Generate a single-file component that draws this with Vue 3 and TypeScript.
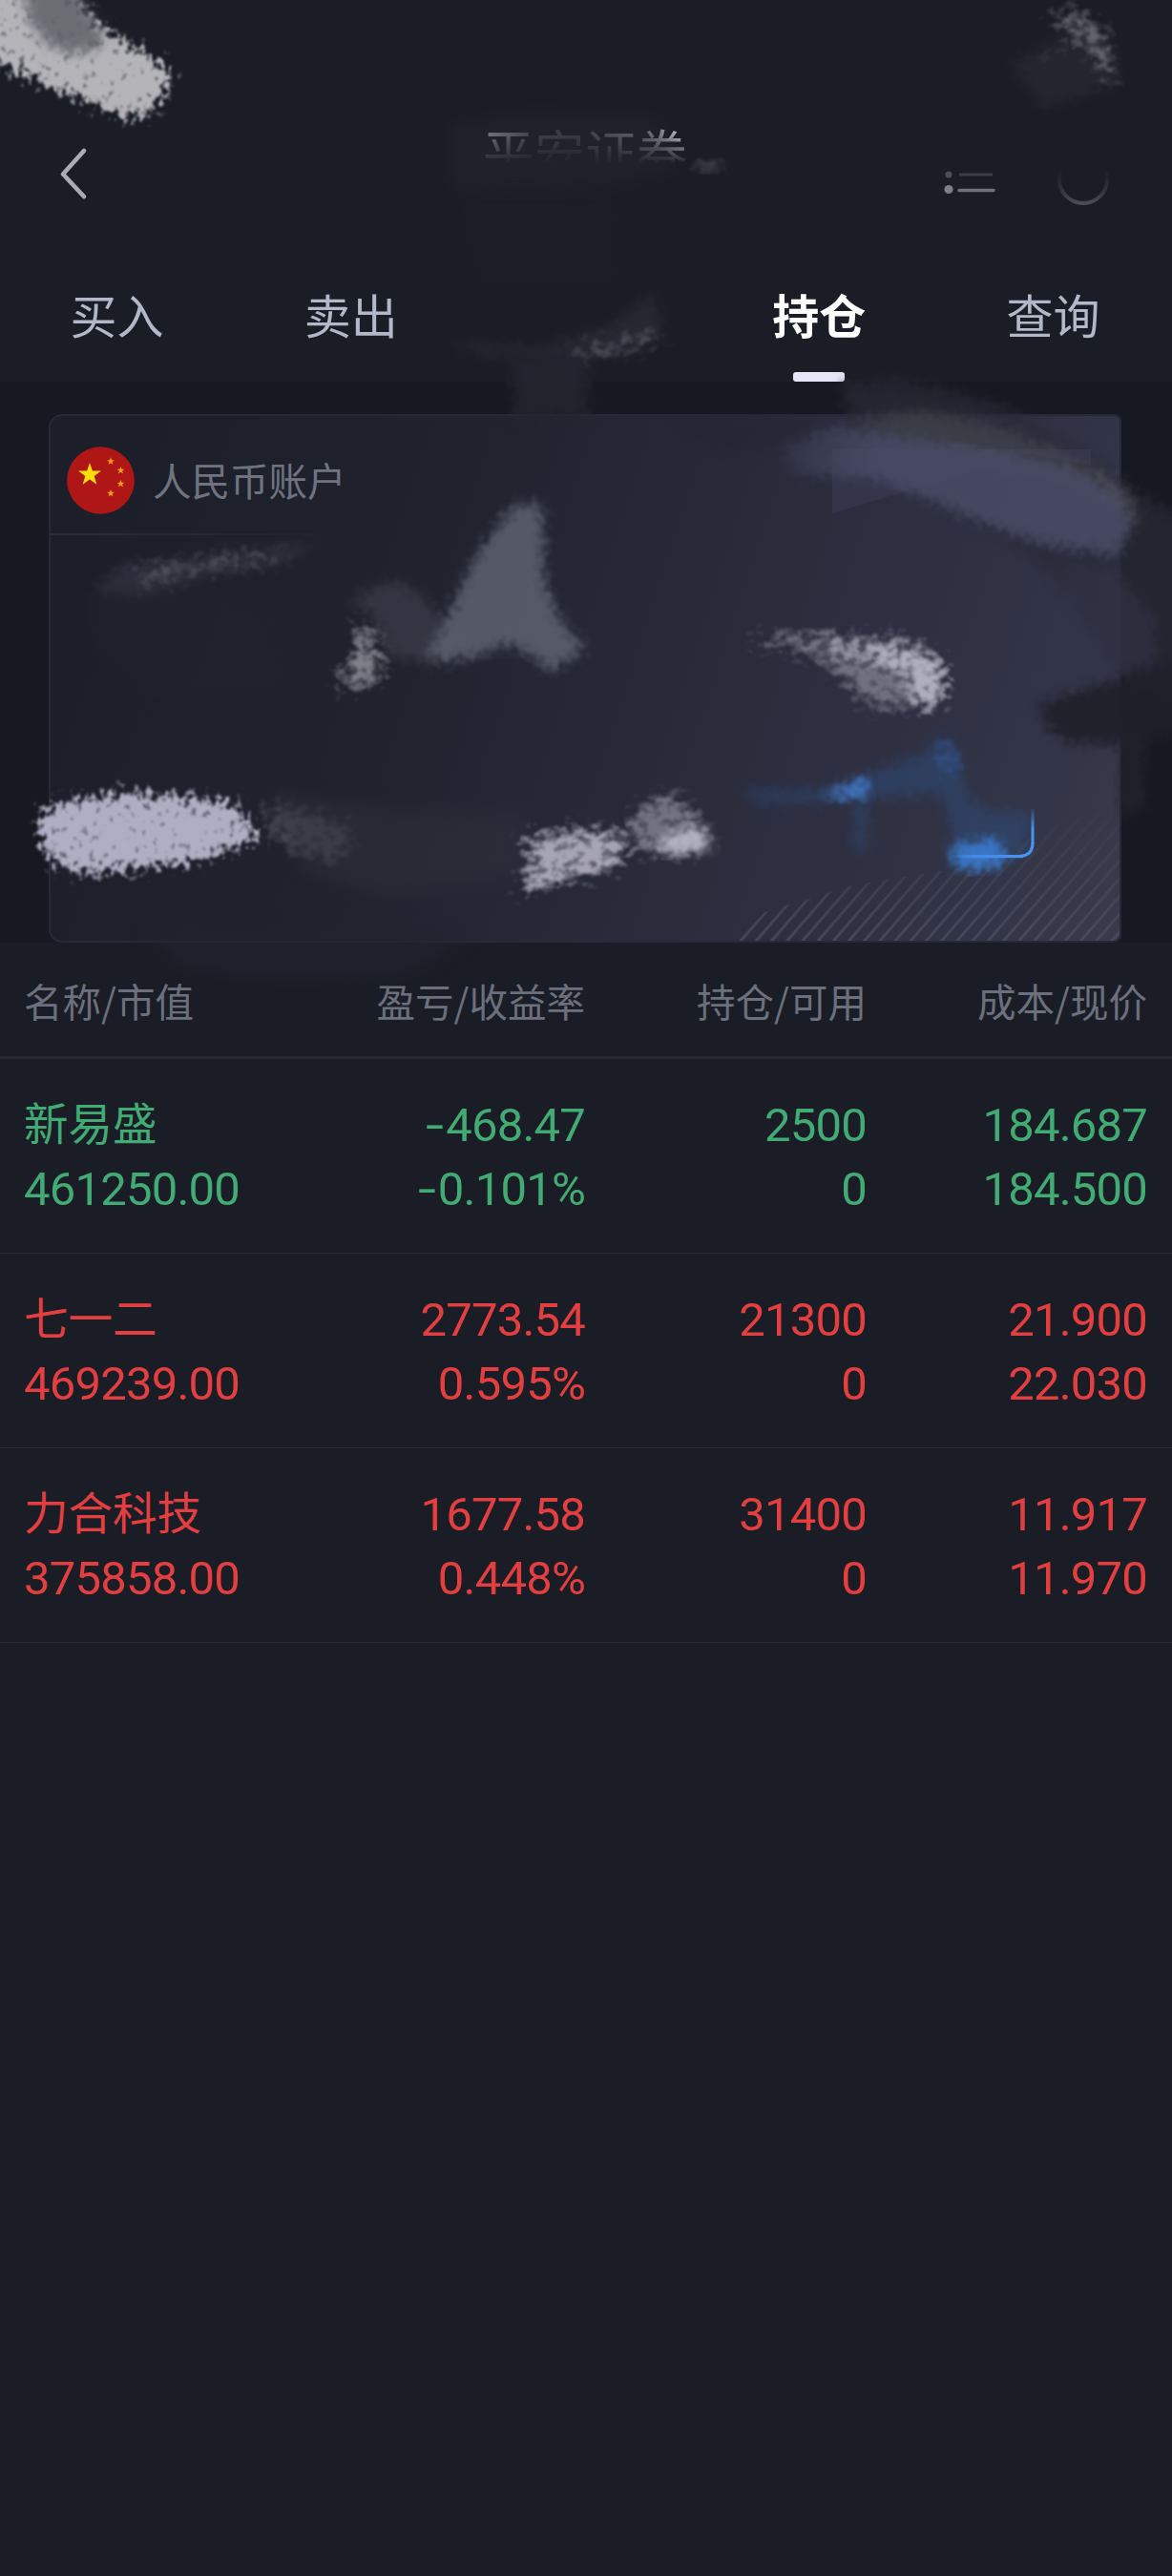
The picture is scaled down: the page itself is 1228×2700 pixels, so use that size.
<script setup lang="ts">
interface Tab {
  label: string
  active?: boolean
}

interface Holding {
  name: string
  value: string
  profit: string
  rate: string
  held: string
  available: string
  cost: string
  price: string
  trend: 'up' | 'down'
}

const tabs: Tab[] = [
  { label: '买入' },
  { label: '卖出' },
  { label: '' },
  { label: '持仓', active: true },
  { label: '查询' },
]

const columns: string[] = ['名称/市值', '盈亏/收益率', '持仓/可用', '成本/现价']

const holdings: Holding[] = [
  { name: '新易盛', value: '461250.00', profit: '-468.47', rate: '-0.101%', held: '2500', available: '0', cost: '184.687', price: '184.500', trend: 'down' },
  { name: '七一二', value: '469239.00', profit: '2773.54', rate: '0.595%', held: '21300', available: '0', cost: '21.900', price: '22.030', trend: 'up' },
  { name: '力合科技', value: '375858.00', profit: '1677.58', rate: '0.448%', held: '31400', available: '0', cost: '11.917', price: '11.970', trend: 'up' },
]

const star = '0,-12.6 2.9,-3.9 12,-3.9 4.7,1.5 7.4,10.2 0,4.9 -7.4,10.2 -4.7,1.5 -12,-3.9 -2.9,-3.9'
const smallStars: [number, number][] = [[46, 15.5], [56.5, 25], [56.5, 39], [46, 49]]
</script>

<template>
  <main class="screen">
    <header class="bar">
      <svg class="back" width="34" height="58" viewBox="0 0 34 58">
        <path d="M27 4 L5 28.500 L27 52" fill="none" stroke="#a9abb6" stroke-width="4.600" stroke-linecap="round" stroke-linejoin="round" />
      </svg>
      <h1 class="title">平安证券</h1>
      <div class="tools">
        <svg width="56" height="50" viewBox="0 0 56 50">
          <circle cx="6" cy="22" r="3.500" fill="#4b4e55" />
          <path d="M17 22H52" stroke="#3a3d44" stroke-width="3" />
          <circle cx="6" cy="37.500" r="4.600" fill="#7c7f85" />
          <path d="M17 38.500H53" stroke="#6e7177" stroke-width="3.400" stroke-linecap="round" />
        </svg>
        <svg width="58" height="58" viewBox="0 0 58 58">
          <defs>
            <linearGradient id="ring" x1="0" y1="0" x2="0" y2="1">
              <stop offset=".25" stop-color="#3d4047" stop-opacity="0" />
              <stop offset=".6" stop-color="#3d4047" stop-opacity=".4" />
              <stop offset="1" stop-color="#4a4d54" />
            </linearGradient>
          </defs>
          <circle cx="29" cy="27" r="25" fill="none" stroke="url(#ring)" stroke-width="4" />
        </svg>
      </div>
    </header>

    <nav class="tabs">
      <div v-for="(tab, i) in tabs" :key="i" class="tab" :class="{ active: tab.active }">{{ tab.label }}</div>
    </nav>

    <section class="account">
      <div class="card">
        <div class="card-head">
          <svg width="71" height="71" viewBox="0 0 71 71">
            <circle cx="35.500" cy="35.500" r="35.300" fill="#ae1715" />
            <polygon :points="star" transform="translate(24 29.500)" fill="#ffdc0c" />
            <polygon v-for="(s, i) in smallStars" :key="i" :points="star" :transform="`translate(${s[0]} ${s[1]}) scale(.34)`" fill="#f0a01c" />
          </svg>
          <span>人民币账户</span>
        </div>
        <svg class="hatch" width="400" height="150" viewBox="0 0 400 150">
          <defs>
            <pattern id="lines" width="16.200" height="20" patternUnits="userSpaceOnUse" patternTransform="skewX(-41)">
              <path d="M4 0V20" stroke="#4b4d5c" stroke-width="4" />
            </pattern>
            <linearGradient id="hatchFade" x1="0" y1="0" x2="0" y2="1">
              <stop offset="0" stop-color="#fff" stop-opacity="0" />
              <stop offset="1" stop-color="#fff" stop-opacity=".8" />
            </linearGradient>
            <mask id="hatchMask"><path d="M0 150 L28 120 L120 92 L230 74 L400 0 V150Z" fill="url(#hatchFade)" /></mask>
          </defs>
          <rect width="400" height="150" fill="url(#lines)" mask="url(#hatchMask)" />
        </svg>
      </div>
    </section>

    <section class="table">
      <div class="row head">
        <div v-for="c in columns" :key="c" class="cell">{{ c }}</div>
      </div>
      <div v-for="h in holdings" :key="h.name" class="row" :class="h.trend">
        <div class="cell"><span class="name">{{ h.name }}</span><span class="num">{{ h.value }}</span></div>
        <div v-for="(pair, i) in [[h.profit, h.rate], [h.held, h.available], [h.cost, h.price]]" :key="i" class="cell">
          <span v-for="(n, j) in pair" :key="j" class="num"><i v-if="n.startsWith('-')" class="minus">-</i>{{ n.replace('-', '') }}</span>
        </div>
      </div>
    </section>

    <!-- brush smears lying over the header and the account card -->
    <svg class="smears" width="1228" height="1060" viewBox="0 0 1228 1060" aria-hidden="true">
      <defs>
        <filter id="grain" x="-15%" y="-25%" width="130%" height="150%" color-interpolation-filters="sRGB">
          <feMorphology in="SourceGraphic" operator="dilate" radius="14" result="wide" />
          <feGaussianBlur in="SourceAlpha" stdDeviation="10" result="a" />
          <feTurbulence type="fractalNoise" baseFrequency=".15 .12" numOctaves="3" seed="4" />
          <feColorMatrix values="0 0 0 0 0  0 0 0 0 0  0 0 0 0 0  2.2 0 0 0 -.6" result="n" />
          <feComposite in="a" in2="n" operator="arithmetic" k2="1" k3=".7" k4="-.35" />
          <feComponentTransfer result="m"><feFuncA type="linear" slope="2.800" intercept="-1.150" /></feComponentTransfer>
          <feComposite in="wide" in2="m" operator="in" />
          <feGaussianBlur stdDeviation="1.200" />
        </filter>
        <filter id="dust" x="-20%" y="-25%" width="140%" height="150%" color-interpolation-filters="sRGB">
          <feMorphology in="SourceGraphic" operator="dilate" radius="12" result="wide" />
          <feGaussianBlur in="SourceAlpha" stdDeviation="10" result="a" />
          <feTurbulence type="fractalNoise" baseFrequency=".1 .12" numOctaves="4" seed="11" />
          <feColorMatrix values="0 0 0 0 0  0 0 0 0 0  0 0 0 0 0  2.4 0 0 0 -.7" result="n" />
          <feComposite in="a" in2="n" operator="arithmetic" k2="1" k3=".6" k4="-.3" />
          <feComponentTransfer result="m"><feFuncA type="linear" slope="1.400" intercept="-.45" /></feComponentTransfer>
          <feComposite in="wide" in2="m" operator="in" />
          <feGaussianBlur stdDeviation="1.300" />
        </filter>
        <filter id="rough" x="-20%" y="-20%" width="140%" height="140%" color-interpolation-filters="sRGB">
          <feGaussianBlur stdDeviation="6" result="b" />
          <feTurbulence type="fractalNoise" baseFrequency=".14" numOctaves="3" seed="7" result="n" />
          <feDisplacementMap in="b" in2="n" scale="20" xChannelSelector="R" yChannelSelector="G" />
          <feGaussianBlur stdDeviation="1.500" />
        </filter>
        <filter id="soft" x="-20%" y="-30%" width="140%" height="160%" color-interpolation-filters="sRGB"><feGaussianBlur stdDeviation="9" /></filter>
        <linearGradient id="blueH" x1="0" x2="1"><stop offset="0" stop-color="#4289e8" stop-opacity="0" /><stop offset=".3" stop-color="#4289e8" /><stop offset="1" stop-color="#4a92f2" /></linearGradient>
        <linearGradient id="blueV" x1="0" y1="0" x2="0" y2="1"><stop offset="0" stop-color="#4a92f2" stop-opacity=".1" /><stop offset=".6" stop-color="#4a92f2" /></linearGradient>
        <linearGradient id="violet" gradientUnits="userSpaceOnUse" x1="820" y1="470" x2="920" y2="490"><stop offset="0" stop-color="#4b4d68" stop-opacity=".25" /><stop offset="1" stop-color="#4b4d68" /></linearGradient>
      </defs>

      <!-- top left -->
      <path d="M-40 -40H56L98 18 132 42 162 58 178 72 182 88 170 106 144 130 98 112 50 92 -40 52Z" fill="#b5b4b9" filter="url(#grain)" />
      <path d="M24 -20H72L112 40 98 54 66 56 42 40 28 14Z" fill="#5b5d64" opacity=".8" filter="url(#rough)" />

      <!-- top right -->
      <path d="M1058 66L1120 34 1164 40 1172 84 1140 100 1092 114Z" fill="#3a3c43" opacity=".3" filter="url(#rough)" />
      <path d="M1096 8L1132 10 1154 26 1166 52 1170 88 1156 90 1146 56 1118 38 1104 22Z" fill="#77797f" opacity=".8" filter="url(#dust)" />
      <path d="M1070 64L1100 52 1134 36 1136 46 1100 60 1074 72Z" fill="#4a4c53" opacity=".6" filter="url(#dust)" />

      <!-- title and hidden tab -->
      <path d="M470 132L560 116 690 124 712 176 640 196 475 200Z" fill="#282a30" opacity=".4" filter="url(#soft)" />
      <path d="M728 168L757 168 748 180 734 180Z" fill="#4a4d54" filter="url(#rough)" />
      <path d="M474 205H650V300H500Z" fill="#202127" opacity=".35" filter="url(#soft)" />
      <path d="M470 358L570 364 640 340 684 306 696 350 670 368 610 378 500 372Z" fill="#33353f" opacity=".45" filter="url(#rough)" />
      <path d="M600 362L650 354 690 342 698 358 650 370 600 378Z" fill="#5b5d69" opacity=".85" filter="url(#dust)" />
      <path d="M535 376H616V440H540Z" fill="#242631" opacity=".8" filter="url(#rough)" />

      <!-- band across the card's upper right corner -->
      <path d="M880 402L940 398 1000 410 1060 430 1100 452 1146 480 1192 516 1250 550V740L1180 720 1100 600 900 470Z" fill="#282a37" opacity=".72" filter="url(#rough)" />
      <path d="M890 442L960 430 1040 444 1100 466 1150 490 1186 520 1196 556 1130 510 960 468Z" fill="#46484f" opacity=".6" filter="url(#rough)" />
      <path d="M872 471H1143V488L1080 476 872 538Z" fill="#4b4d6a" opacity=".25" />
      <path d="M820 462L880 446 960 460 1040 472 1120 490 1170 516 1186 550 1172 582 1090 570 1030 548 970 522 915 502 830 496Z" fill="url(#violet)" opacity=".85" filter="url(#rough)" />
      <path d="M1150 486L1176 508 1190 540 1184 568 1172 530 1146 506Z" fill="#5a5b5f" opacity=".45" filter="url(#dust)" />
      <path d="M705 438L860 438 836 464 760 476 716 456Z" fill="#20222c" opacity=".35" filter="url(#rough)" />
      <path d="M1120 590L1170 600 1212 650 1210 696 1170 712 1090 690Z" fill="#323448" opacity=".6" filter="url(#rough)" />
      <path d="M1088 738L1124 726 1250 690V762L1190 780 1124 780 1098 764Z" fill="#1e202a" opacity=".95" filter="url(#rough)" />
      <path d="M1172 772L1200 774 1200 846 1172 858Z" fill="#252832" opacity=".6" filter="url(#rough)" />

      <!-- first figure line -->
      <path d="M98 620L130 592 200 586 330 570 300 590 210 606 150 625Z" fill="#343743" opacity=".7" filter="url(#rough)" />
      <path d="M130 600L170 592 260 578 310 576 280 590 200 602 160 616Z" fill="#5d606b" opacity=".8" filter="url(#dust)" />
      <path d="M95 618L200 605 280 640 300 720 170 735 100 670Z" fill="#252731" opacity=".35" filter="url(#soft)" />
      <path d="M366 630L410 608 440 622 470 660 480 694 410 690 390 644Z" fill="#444753" opacity=".55" filter="url(#rough)" />
      <path d="M372 648L388 652 402 690 404 716 374 724 344 720 366 698Z" fill="#a3a5ae" opacity=".75" filter="url(#dust)" />
      <path d="M540 528L568 530 570 610 590 654 614 680 576 704 550 682 530 676 490 690 446 692 470 642 504 574Z" fill="#5d616e" opacity=".88" filter="url(#rough)" />
      <path d="M776 672L820 662 880 664 950 666 984 682 994 710 984 740 940 746 900 738 880 708 840 684 790 678Z" fill="#8b8a97" opacity=".75" filter="url(#dust)" />
      <path d="M858 668L900 676 950 676 984 688 994 712 984 746 960 744 944 704 900 690 870 684Z" fill="#c0becd" opacity=".85" filter="url(#dust)" />

      <!-- second figure line -->
      <path d="M40 846L76 838 120 828 190 834 244 838 262 864 280 878 246 892 190 908 90 918 58 910 38 880Z" fill="#b0aec2" filter="url(#grain)" />
      <path d="M268 840L320 846 372 866 366 896 344 906 290 888Z" fill="#5d5f6c" opacity=".65" filter="url(#dust)" />
      <path d="M280 832L420 850 550 850 550 920 400 938 320 912Z" fill="#2f313c" opacity=".5" filter="url(#soft)" />
      <path d="M536 882L566 872 620 866 650 868 658 892 648 912 606 922 546 938 536 930 560 900Z" fill="#b8b6c7" opacity=".92" filter="url(#dust)" />
      <path d="M656 858L684 832 712 832 732 854 746 884 734 896 680 898 652 884Z" fill="#908f9c" opacity=".75" filter="url(#dust)" />
      <path d="M686 890L700 876 736 866 744 890 700 896Z" fill="#c6c4d4" opacity=".85" filter="url(#rough)" />

      <!-- blue control -->
      <path d="M780 828L870 828 906 812 980 786 972 776H1000L1014 836 1036 850 1080 852 1076 896 1010 908 986 832 908 836 908 890H896V840L790 842Z" fill="#2e5e9e" opacity=".3" filter="url(#rough)" />
      <path d="M860 834L908 814 908 838Z" fill="#4583db" opacity=".85" filter="url(#rough)" />
      <path d="M974 774L1000 776 1008 816 988 820Z" fill="#315fa5" opacity=".5" filter="url(#dust)" />
      <path d="M994 886L1046 878 1054 900 1042 912 1002 912Z" fill="#3b7bd0" opacity=".9" filter="url(#rough)" />
      <rect x="998" y="896" width="74" height="3.200" fill="url(#blueH)" />
      <path d="M1068 897.500Q1082 897 1082 883" fill="none" stroke="#4a92f2" stroke-width="3.200" />
      <rect x="1080.500" y="848" width="3" height="36" fill="url(#blueV)" />

      <!-- beneath the card -->
      <path d="M150 975H500L430 1020 300 1028 190 1014Z" fill="#222430" opacity=".65" filter="url(#soft)" />
    </svg>
  </main>
</template>

<style>
body {
  background: #1a1d26;
}
</style>

<style scoped>
.screen {
  position: relative;
  width: 1228px;
  height: 2700px;
  overflow: hidden;
  background: #1a1d26;
  font-family: "Noto Sans CJK SC", "Noto Sans", sans-serif;
}

.bar {
  display: flex;
  align-items: flex-start;
  box-sizing: border-box;
  height: 264px;
  padding: 114px 64px 0 61px;
}

.back {
  margin-top: 40px;
}

.title {
  margin: 4px 0 0 411px;
  font-size: 53.5px;
  line-height: 80px;
  font-weight: 400;
  color: transparent;
  background: linear-gradient(90deg, #a3a5aa, #4c4f55 25%, #42454c 45%, #7b7d83 75%, #babcc1);
  background-clip: text;
  -webkit-mask-image: linear-gradient(#000 24px, rgba(0, 0, 0, .5) 40px, transparent 54px);
  mask-image: linear-gradient(#000 24px, rgba(0, 0, 0, .5) 40px, transparent 54px);
}

.tools {
  display: flex;
  align-items: flex-start;
  gap: 62px;
  margin: 47px 0 0 auto;
}

.tabs {
  display: flex;
  height: 136px;
  padding-right: 2px;
}

.tab {
  display: flex;
  flex: 1;
  flex-direction: column;
  align-items: center;
  justify-content: space-between;
  height: 136px;
  font-size: 49px;
  line-height: 130px;
  color: #b3b8c9;
}

.tab.active {
  color: #fff;
  font-weight: 700;
}

.tab.active::after {
  content: "";
  width: 54px;
  height: 10px;
  margin-top: -10px;
  flex: none;
  border-radius: 3px;
  background: #e5e6f7;
}

.account {
  box-sizing: border-box;
  height: 588px;
  padding: 34px 53px 0 51px;
  background: #161921;
}

.card {
  display: flex;
  flex-direction: column;
  justify-content: space-between;
  box-sizing: border-box;
  height: 554px;
  border: 2px solid #262938;
  border-radius: 14px 8px 8px 14px;
  background: linear-gradient(108deg, #1c1f2a 8%, #21232f 38%, #2a2c3c 62%, #323447 88%, #393b4c);
  overflow: hidden;
}

.card-head {
  display: flex;
  align-items: center;
  gap: 19px;
  box-sizing: border-box;
  height: 125px;
  padding: 11px 17px 0;
  border-bottom: 2px solid;
  border-image: linear-gradient(90deg, #2b2e39, transparent 30%) 1;
  font-size: 40.5px;
  line-height: 60px;
  color: #6f7380;
}

.card-head span {
  padding-bottom: 1px;
}

.hatch {
  align-self: flex-end;
  flex: none;
}

.row {
  display: grid;
  grid-template-columns: 300px 288px 295px 294px;
  align-items: center;
  box-sizing: border-box;
  height: 204px;
  padding: 3px 26px 0 25px;
  border-bottom: 1px solid #282b34;
  line-height: 67px;
}

.row.head {
  height: 122px;
  padding-top: 2px;
  border-bottom: 3px solid #272930;
  font-size: 40.5px;
  color: #6c707c;
}

.cell {
  display: flex;
  flex-direction: column;
  text-align: right;
  white-space: nowrap;
}

.cell:first-child {
  text-align: left;
}

.name {
  margin-bottom: 9px;
  font-size: 46.5px;
  line-height: 58px;
}

.num {
  font-family: Roboto, "Noto Sans", sans-serif;
  font-size: 49px;
  letter-spacing: -.8px;
}

.minus {
  display: inline-block;
  margin-right: 3px;
  font-style: normal;
  transform: scaleX(1.4);
  transform-origin: right;
}

.down {
  color: #42ab74;
}

.up {
  color: #e43f40;
}

.smears {
  position: absolute;
  top: 0;
  left: 0;
  pointer-events: none;
}
</style>
